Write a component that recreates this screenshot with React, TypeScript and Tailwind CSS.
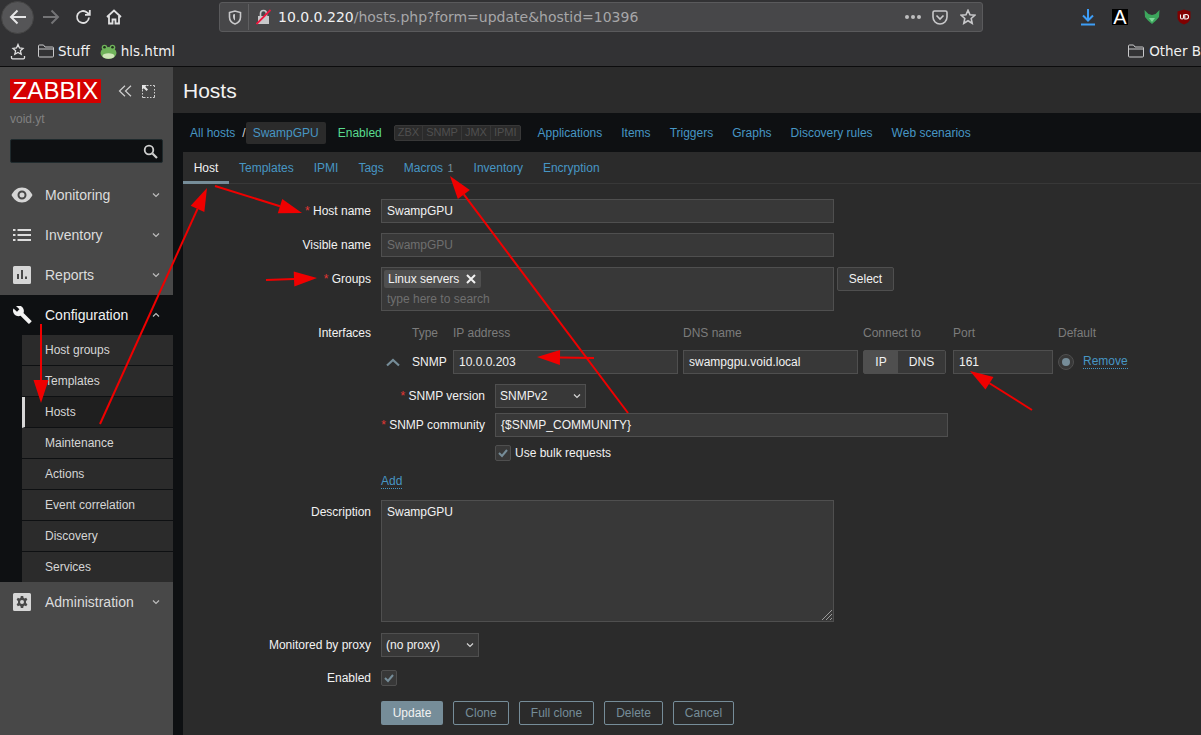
import React from "react";

const Arrow = ({ x1, y1, x2, y2 }: { x1: number; y1: number; x2: number; y2: number }) => {
  const dx = x2 - x1, dy = y2 - y1, l = Math.hypot(dx, dy), ux = dx / l, uy = dy / l;
  const bx = x2 - ux * 23, by = y2 - uy * 23, w = 7.5;
  return (
    <g>
      <line x1={x1} y1={y1} x2={bx} y2={by} stroke="#f00000" strokeWidth="2" />
      <polygon points={`${x2},${y2} ${bx - uy * w},${by + ux * w} ${bx + uy * w},${by - ux * w}`} fill="#f00000" />
    </g>
  );
};

const Chevron = ({ up = false, color = "#bdbdbd" }: { up?: boolean; color?: string }) => (
  <svg width="8" height="6" viewBox="0 0 8 6" className="block shrink-0">
    <path d={up ? "M1 4.500 L4 1.500 L7 4.500" : "M1 1.500 L4 4.500 L7 1.500"} fill="none" stroke={color} strokeWidth="1.200" />
  </svg>
);

const Folder = () => (
  <svg width="16" height="14" viewBox="0 0 16 14" className="block shrink-0">
    <path d="M.5 12V2A1 1 0 0 1 1.500 1h4L7 3h7.500a1 1 0 0 1 1 1v8a1 1 0 0 1-1 1h-13a1 1 0 0 1-1-1Z M.5 5h15" fill="none" stroke="#c8c8ca" strokeWidth="1" />
  </svg>
);

const MenuItem = ({ icon, label, open = false }: { icon: React.ReactNode; label: string; open?: boolean }) => (
  <div className={`flex h-10 items-center ${open ? "bg-[#0e1012] text-[#f2f2f2]" : "text-[#dcdcdc]"}`}>
    <div className="flex w-[45px] justify-center pr-[1px]">{icon}</div>
    <span className="flex-1 text-sm">{label}</span>
    <div className="pr-[13px]"><Chevron up={open} /></div>
  </div>
);

const SubItem = ({ label, active = false, last = false }: { label: string; active?: boolean; last?: boolean }) => (
  <div className={`flex items-center text-xs text-[#d6d6d6] ${last ? "h-[30px]" : "h-[31px] border-b border-[#0e1012]"} ${active ? "border-l-[3px] border-l-[#d6d6d6] bg-[#1f1f1f] pl-[20px]" : "bg-[#2b2b2b] pl-[23px]"}`}>
    {label}
  </div>
);

const Input = ({ value, w, muted = false }: { value: string; w: string; muted?: boolean }) => (
  <div className={`flex h-6 items-center border border-[#4f4f4f] bg-[#383838] px-[5px] text-xs ${w} ${muted ? "text-[#6f6f6f]" : "text-[#f2f2f2]"}`}>{value}</div>
);

const Select = ({ value, w }: { value: string; w: string }) => (
  <div className={`flex h-6 items-center justify-between border border-[#4f4f4f] bg-[#383838] px-[4px] text-xs text-[#f2f2f2] ${w}`}>
    <span>{value}</span>
    <Chevron color="#d6d6d6" />
  </div>
);

const Check = () => (
  <div className="flex h-4 w-4 items-center justify-center rounded-[2px] border border-[#4f4f4f] bg-[#383838]">
    <svg width="12" height="10" viewBox="0 0 12 10"><path d="M2 5 L5 8 L10 2" fill="none" stroke="#768d99" strokeWidth="2" /></svg>
  </div>
);

const Label = ({ text, req = false }: { text: string; req?: boolean }) => (
  <div className="w-[188px] shrink-0 text-right text-xs text-[#f2f2f2]">
    {req && <span className="text-[#e33734]">* </span>}{text}
  </div>
);

const OutBtn = ({ label, w }: { label: string; w: string }) => (
  <div className={`flex h-6 items-center justify-center rounded-[2px] border border-[#768d99] text-xs text-[#768d99] ${w}`}>{label}</div>
);

const topLinks: string[] = ["Applications", "Items", "Triggers", "Graphs", "Discovery rules", "Web scenarios"];

export default function App() {
  return (
    <div className="relative h-[735px] w-[1201px] overflow-hidden bg-[#2b2b2b] [font-family:Liberation_Sans,sans-serif]">
      {/* browser chrome */}
      <div className="h-[67px] border-b border-[#0c0c0d] bg-[#323234] [font-family:DejaVu_Sans,sans-serif] text-[#f0f0f1]">
        <div className="flex h-[34px] items-center">
          <div className="ml-[1px] flex h-[33px] w-[33px] shrink-0 items-center justify-center rounded-full border border-[#444] bg-[#555557]">
            <svg width="18" height="16" viewBox="0 0 18 16"><path d="M17 8H2M8.500 1.500 2 8l6.500 6.500" fill="none" stroke="#e6e6e7" strokeWidth="2" /></svg>
          </div>
          <svg className="ml-[8px] shrink-0" width="18" height="16" viewBox="0 0 18 16"><path d="M1 8h15M9.500 1.500 16 8l-6.500 6.500" fill="none" stroke="#747476" strokeWidth="2" /></svg>
          <svg className="ml-[15px] shrink-0" width="16" height="16" viewBox="0 0 16 16"><path d="M14 8.500A6 6 0 1 1 12 3.500L14.500 5.500M14.800 1v4.800H10" fill="none" stroke="#e0e0e1" strokeWidth="1.800" /></svg>
          <svg className="ml-[15px] shrink-0" width="16" height="16" viewBox="0 0 16 16"><path d="M1 8 8 1.500 15 8M3 7v7.500h3.500V10.500h3v4H13V7" fill="none" stroke="#e0e0e1" strokeWidth="1.800" /></svg>
          <div className="ml-[97px] flex h-[30px] w-[764px] shrink-0 items-center rounded-[3px] border border-[#5a5a5c] bg-[#474749]">
            <svg className="ml-[8px]" width="14" height="15" viewBox="0 0 14 15"><path d="M1.500 2.500 7 1l5.500 1.500V7c0 3.500-2.500 6-5.500 7C4 13 1.500 10.500 1.500 7Z" fill="none" stroke="#c8c8ca" strokeWidth="1.600" /><path d="M7 4v6.500c-1-.5-2-2-2-4V4.500Z" fill="#c8c8ca" /></svg>
            <div className="ml-[6px] h-[26px] w-px bg-[#5f5f61]" />
            <svg className="ml-[7px]" width="15" height="16" viewBox="0 0 15 16"><path d="M4.500 7V4.500a3 3 0 0 1 6 0V7" fill="none" stroke="#c8c8ca" strokeWidth="1.600" /><rect x="2" y="7" width="11" height="8" fill="#c8c8ca" /><path d="M0.500 15 14.500 1" stroke="#f0173f" strokeWidth="1.800" /></svg>
            <span className="ml-[7px] text-sm">10.0.0.220<span className="text-[#a6a6a8]">/hosts.php?form=update&amp;hostid=10396</span></span>
            <div className="flex-1" />
            <div className="flex gap-[2px]">
              <div className="h-[4px] w-[4px] rounded-full bg-[#bdbdbf]" /><div className="h-[4px] w-[4px] rounded-full bg-[#bdbdbf]" /><div className="h-[4px] w-[4px] rounded-full bg-[#bdbdbf]" />
            </div>
            <svg className="ml-[11px]" width="16" height="15" viewBox="0 0 16 15"><path d="M1 2.500C1 1.500 1.700 1 2.500 1h11c.8 0 1.500.5 1.500 1.500V7a7 7 0 0 1-14 0Z M4.500 5.500 8 9l3.500-3.500" fill="none" stroke="#c8c8ca" strokeWidth="1.600" /></svg>
            <svg className="ml-[12px] mr-[6px]" width="16" height="16" viewBox="0 0 16 16"><path d="M8 1.300 10 5.800l4.800.5-3.600 3.200 1 4.800L8 11.800l-4.200 2.500 1-4.800L1.200 6.300 6 5.800Z" fill="none" stroke="#c8c8ca" strokeWidth="1.600" /></svg>
          </div>
          <svg className="ml-[97px] shrink-0" width="16" height="18" viewBox="0 0 16 18"><path d="M8 1v11M3 7.500l5 5 5-5M1 16.500h14" fill="none" stroke="#3d9df6" strokeWidth="2" /></svg>
          <div className="ml-[16px] flex h-4 w-4 shrink-0 items-center justify-center overflow-hidden bg-black [font-family:Liberation_Sans,sans-serif] text-[20px] leading-none text-white">A</div>
          <svg className="ml-[16px] shrink-0" width="16" height="16" viewBox="0 0 16 16"><path d="M0.500 1 4.500 5 8 6l3.500-1 4-4-.5 7-3 3.500L8 15l-4-3.500-3-3.500Z" fill="#3ca65c" /><path d="M5 9h6L8 13Z" fill="#7fd79a" /></svg>
          <svg className="ml-[16px] shrink-0" width="16" height="16" viewBox="0 0 16 16"><path d="M8 .5 14.500 2.500V9C14 12.500 11 14.500 8 15.500 5 14.500 2 12.500 1.500 9V2.500Z" fill="#800000" /><path d="M4.500 5.500v3a1.500 1.500 0 0 0 3 0v-3M8.800 5.500h1.500a2 2 0 0 1 0 4.500H8.800Z" fill="none" stroke="#f2f2f2" strokeWidth="1.100" /></svg>
        </div>
        <div className="flex h-[32px] items-center pt-[2px] text-[13.5px] whitespace-nowrap">
          <svg className="ml-[10px] shrink-0" width="16" height="17" viewBox="0 0 16 17"><path d="M8 1.500 9.500 5l3.500.4-2.600 2.400.8 3.500L8 9.500l-3.200 1.800.8-3.500L3 5.400 6.500 5Z M1.500 13v1.800a1 1 0 0 0 1 1h11a1 1 0 0 0 1-1V13" fill="none" stroke="#e0e0e1" strokeWidth="1.300" /></svg>
          <div className="ml-[12px]"><Folder /></div>
          <span className="ml-[4px]">Stuff</span>
          <svg className="ml-[10px] shrink-0" width="17" height="15" viewBox="0 0 17 15">
            <ellipse cx="8.500" cy="9" rx="8" ry="6" fill="#6fb35a" /><circle cx="4.500" cy="3.500" r="2.800" fill="#6fb35a" /><circle cx="12.500" cy="3.500" r="2.800" fill="#6fb35a" /><circle cx="4.500" cy="3.200" r="1.300" fill="#20301c" /><circle cx="12.500" cy="3.200" r="1.300" fill="#20301c" /><ellipse cx="8.500" cy="12" rx="6" ry="2.700" fill="#cfe6b8" />
          </svg>
          <span className="ml-[4px]">hls.html</span>
          <div className="ml-[953px]"><Folder /></div>
          <span className="ml-[5px]">Other Bookmarks</span>
        </div>
      </div>

      <div className="flex h-[668px]">
        {/* sidebar */}
        <aside className="w-[173px] shrink-0 bg-[#484848]">
          <div className="px-[10px] pt-[12px]">
            <div className="flex items-center">
              <div className="flex h-6 w-[91px] items-center justify-center bg-[#d40000] text-[24px] leading-none tracking-[0.1px] text-white">ZABBIX</div>
              <svg className="ml-[17px]" width="14" height="12" viewBox="0 0 14 12"><path d="M7 .8 1.500 6 7 11.200M13 .8 7.500 6 13 11.200" fill="none" stroke="#d0d0d0" strokeWidth="1.200" /></svg>
              <svg className="ml-[10px]" width="13" height="13" viewBox="0 0 13 13"><path d="M5 .5h1.500M8 .5h1.500M11 .5h1.500V2M12.500 4v1.500M12.500 7v1.500M12.500 10v2.500H11M9.500 12.500H8M6.500 12.500H5M3.500 12.500H.5V11M.5 9.500V8M.5 6.500V5" fill="none" stroke="#d0d0d0" /><path d="M0 0h5l-1.700 1.700L6 4.500 4.500 6 1.700 3.300 0 5Z" fill="#e6e6e6" /></svg>
            </div>
            <div className="mt-[8px] text-xs leading-[16px] text-[#808080]">void.yt</div>
            <div className="mt-[12px] flex h-6 items-center justify-end rounded-[2px] border border-[#1f2a2d] bg-[#0e1012] pr-[4px]">
              <svg width="15" height="15" viewBox="0 0 15 15"><circle cx="6" cy="6" r="4.300" fill="none" stroke="#cfcfcf" strokeWidth="1.800" /><path d="M9.500 9.500 14 14" stroke="#cfcfcf" strokeWidth="2.200" /></svg>
            </div>
          </div>
          <div className="mt-[12px]">
            <MenuItem label="Monitoring" icon={<svg width="22" height="16" viewBox="0 0 22 16"><path fillRule="evenodd" d="M11 .5C6 .5 2.500 4 .5 8c2 4 5.500 7.500 10.500 7.500S19.500 12 21.500 8C19.500 4 16 .5 11 .5Zm0 3a4.500 4.500 0 1 1 0 9 4.500 4.500 0 0 1 0-9Zm0 2a2.500 2.500 0 1 0 0 5 2.500 2.500 0 0 0 0-5Z" fill="#d6d6d6" /></svg>} />
            <MenuItem label="Inventory" icon={<svg width="18" height="12" viewBox="0 0 18 12"><path d="M0 0h2.500v2H0ZM4.500 0H18v2H4.500ZM0 5h2.500v2H0ZM4.500 5H18v2H4.500ZM0 10h2.500v2H0ZM4.500 10H18v2H4.500Z" fill="#dcdcdc" /></svg>} />
            <MenuItem label="Reports" icon={<svg width="18" height="18" viewBox="0 0 18 18"><path fillRule="evenodd" d="M1.500 0h15A1.500 1.500 0 0 1 18 1.500v15a1.500 1.500 0 0 1-1.500 1.500h-15A1.500 1.500 0 0 1 0 16.500v-15A1.500 1.500 0 0 1 1.500 0ZM8 4v9h2V4ZM4 8v5h2V8Zm8 2.500V13h2v-2.500Z" fill="#d6d6d6" /></svg>} />
            <MenuItem open label="Configuration" icon={<svg width="19" height="19" viewBox="0 0 19 19"><path d="M18.300 14.800 10.500 7c.8-2 .4-4.300-1.300-6C7.500-.7 4.900-1 3 0l3.400 3.300-2.400 2.400L.5 2.400C-.5 4.300-.1 6.800 1.500 8.500c1.700 1.700 4 2.100 6 1.300l7.800 7.800c.3.300.9.300 1.200 0l1.800-1.800c.4-.4.400-1 0-1Z" fill="#f2f2f2" /></svg>} />
            <div className="flex bg-[#0e1012]">
              <div className="w-[22px] shrink-0" />
              <div className="flex-1">
                {["Host groups", "Templates"].map((s) => <SubItem key={s} label={s} />)}
                <SubItem label="Hosts" active />
                {["Maintenance", "Actions", "Event correlation", "Discovery"].map((s) => <SubItem key={s} label={s} />)}
                <SubItem label="Services" last />
              </div>
            </div>
            <MenuItem label="Administration" icon={<svg width="18" height="18" viewBox="0 0 18 18"><path fillRule="evenodd" d="M1.500 0h15A1.500 1.500 0 0 1 18 1.500v15a1.500 1.500 0 0 1-1.500 1.500h-15A1.500 1.500 0 0 1 0 16.500v-15A1.500 1.500 0 0 1 1.500 0ZM7.800 3l-.3 1.800-1 .6L4.800 4.700 3.600 6.800 5 8v2l-1.400 1.200 1.200 2.100 1.700-.7 1 .6.300 1.800h2.400l.3-1.800 1-.6 1.700.7 1.200-2.100L13 10V8l1.400-1.200-1.200-2.100-1.700.7-1-.6L10.200 3ZM9 7a2 2 0 1 1 0 4 2 2 0 0 1 0-4Z" fill="#d6d6d6" /></svg>} />
          </div>
        </aside>

        {/* main */}
        <main className="min-w-0 flex-1">
          <div className="flex h-[46px] items-center pl-[10px] pt-[2px] text-[21px] text-[#f2f2f2]">Hosts</div>
          <div className="flex h-[39px] items-center bg-[#0e1012] pl-[17px] text-xs whitespace-nowrap text-[#4796c4]">
            <span>All hosts</span>
            <span className="ml-[7px] text-[#d6d6d6]">/</span>
            <span className="flex h-[22px] w-[80px] items-center justify-center rounded-[2px] bg-[#2b2b2b]">SwampGPU</span>
            <span className="ml-[12px] text-[#59db8f]">Enabled</span>
            <div className="ml-[12px] flex h-[16px] items-center rounded-[2px] border border-[#383838] bg-[#2b2b2b] text-[11px] text-[#4f4f4f]">
              <span className="border-r border-[#383838] px-[3px]">ZBX</span>
              <span className="border-r border-[#383838] px-[3px]">SNMP</span>
              <span className="border-r border-[#383838] px-[3px]">JMX</span>
              <span className="px-[3px]">IPMI</span>
            </div>
            <div className="ml-[17px] flex gap-[19px]">
              {topLinks.map((t) => <span key={t}>{t}</span>)}
            </div>
          </div>
          <div className="flex h-full">
            <div className="w-[10px] shrink-0 bg-[#0e1012]" />
            <div className="min-w-0 flex-1">
              {/* tabs */}
              <div className="flex h-8 border-b border-[#383838] text-xs text-[#4796c4]">
                <div className="flex h-8 w-[46px] items-center justify-center border-b-[3px] border-[#768d99] pt-[3px] text-[#f2f2f2]">Host</div>
                <div className="flex items-center gap-[20px] pl-[10px]">
                  <span>Templates</span><span>IPMI</span><span>Tags</span>
                  <span>Macros <span className="ml-[1px] text-[11px] text-[#768d99]">1</span></span>
                  <span>Inventory</span><span>Encryption</span>
                </div>
              </div>

              {/* form */}
              <div className="pt-[15px] text-xs">
                <div className="flex items-center gap-[10px]"><Label req text="Host name" /><Input w="w-[453px]" value="SwampGPU" /></div>
                <div className="mt-[10px] flex items-center gap-[10px]"><Label text="Visible name" /><Input w="w-[453px]" muted value="SwampGPU" /></div>
                <div className="mt-[10px] flex gap-[10px]">
                  <div className="pt-[4px]"><Label req text="Groups" /></div>
                  <div className="h-[44px] w-[453px] border border-[#4f4f4f] bg-[#383838] pl-[2px] pt-[2px]">
                    <div className="flex h-[18px] w-[97px] items-center rounded-[2px] bg-[#4f4f4f] pl-[4px] text-[#f2f2f2]">
                      Linux servers
                      <svg className="ml-[7px]" width="10" height="10" viewBox="0 0 10 10"><path d="M1 1l8 8M9 1 1 9" stroke="#f2f2f2" strokeWidth="2" /></svg>
                    </div>
                    <div className="mt-[3px] pl-[3px] leading-[16px] text-[#6f6f6f]">type here to search</div>
                  </div>
                  <div className="ml-[-7px] flex h-6 w-[57px] items-center justify-center rounded-[2px] border border-[#4f4f4f] bg-[#383838] text-[#f2f2f2]">Select</div>
                </div>
                <div className="mt-[14px] flex gap-[10px]">
                  <div><Label text="Interfaces" /></div>
                  <div className="min-w-0 flex-1">
                    <div className="grid grid-cols-[31px_41px_230px_180px_90px_105px_25px_auto] items-center">
                      <div /><div className="text-[#7c7c7c]">Type</div><div className="text-[#7c7c7c]">IP address</div><div className="text-[#7c7c7c]">DNS name</div><div className="text-[#7c7c7c]">Connect to</div><div className="text-[#7c7c7c]">Port</div><div className="text-[#7c7c7c]">Default</div><div />
                    </div>
                    <div className="mt-[9px] grid grid-cols-[31px_41px_230px_180px_90px_105px_25px_auto] items-center">
                      <div className="flex justify-center pr-[7px]"><svg width="14" height="9" viewBox="0 0 14 9"><path d="M1 7.500 7 2l6 5.500" fill="none" stroke="#768d99" strokeWidth="2.200" /></svg></div>
                      <div className="text-[#f2f2f2]">SNMP</div>
                      <Input w="w-[225px]" value="10.0.0.203" />
                      <Input w="w-[175px]" value="swampgpu.void.local" />
                      <div className="flex h-6 w-[83px] rounded-[2px] border border-[#4f4f4f] text-[#f2f2f2]">
                        <div className="flex w-[34px] items-center justify-center bg-[#4f4f4f]">IP</div>
                        <div className="flex flex-1 items-center justify-center bg-[#383838]">DNS</div>
                      </div>
                      <Input w="w-[100px]" value="161" />
                      <div className="flex h-4 w-4 items-center justify-center rounded-full border border-[#4f4f4f] bg-[#383838]"><div className="h-2 w-2 rounded-full bg-[#768d99]" /></div>
                      <div className="w-fit border-b border-dotted border-[#4796c4] leading-[13px] text-[#4796c4]">Remove</div>
                    </div>
                    <div className="mt-[10px] flex items-center gap-[10px]">
                      <div className="w-[104px] text-right text-[#f2f2f2]"><span className="text-[#e33734]">* </span>SNMP version</div>
                      <Select w="w-[91px]" value="SNMPv2" />
                    </div>
                    <div className="mt-[5px] flex items-center gap-[10px]">
                      <div className="w-[104px] whitespace-nowrap text-right text-[#f2f2f2]"><span className="text-[#e33734]">* </span>SNMP community</div>
                      <Input w="w-[453px]" value="{$SNMP_COMMUNITY}" />
                    </div>
                    <div className="mt-[8px] flex items-center gap-[4px] pl-[114px] text-[#f2f2f2]"><Check /><span>Use bulk requests</span></div>
                    <div className="mt-[13px] w-fit border-b border-dotted border-[#4796c4] leading-[14px] text-[#4796c4]">Add</div>
                  </div>
                </div>
                <div className="mt-[11px] flex gap-[10px]">
                  <div className="pt-[4px]"><Label text="Description" /></div>
                  <div className="relative h-[122px] w-[453px] border border-[#4f4f4f] bg-[#383838] px-[5px] pt-[3px] text-[#f2f2f2]">
                    SwampGPU
                    <svg className="absolute bottom-0 right-0" width="12" height="12" viewBox="0 0 12 12"><path d="M1 11 11 1M5 11l6-6M9 11l2-2" stroke="#9a9a9a" strokeWidth="1" /></svg>
                  </div>
                </div>
                <div className="mt-[11px] flex items-center gap-[10px]"><Label text="Monitored by proxy" /><Select w="w-[98px]" value="(no proxy)" /></div>
                <div className="mt-[13px] flex items-center gap-[10px]"><Label text="Enabled" /><Check /></div>
                <div className="mt-[15px] flex gap-[10px] pl-[198px]">
                  <div className="flex h-6 w-[62px] items-center justify-center rounded-[2px] bg-[#768d99] text-[#f2f2f2]">Update</div>
                  <OutBtn label="Clone" w="w-[56px]" />
                  <OutBtn label="Full clone" w="w-[75px]" />
                  <OutBtn label="Delete" w="w-[59px]" />
                  <OutBtn label="Cancel" w="w-[61px]" />
                </div>
              </div>
            </div>
          </div>
        </main>
      </div>

      {/* red annotations drawn over the screenshot */}
      <svg className="pointer-events-none absolute left-0 top-0" width="1201" height="735">
        <Arrow x1={100} y1={424} x2={207} y2={188} />
        <Arrow x1={215} y1={186} x2={302} y2={213} />
        <Arrow x1={266} y1={280} x2={317} y2={278} />
        <Arrow x1={41} y1={324} x2={41} y2={403} />
        <Arrow x1={594} y1={358} x2={537} y2={357} />
        <Arrow x1={628} y1={413} x2={450} y2={176} />
        <Arrow x1={1032} y1={410} x2={970} y2={371} />
      </svg>
    </div>
  );
}
